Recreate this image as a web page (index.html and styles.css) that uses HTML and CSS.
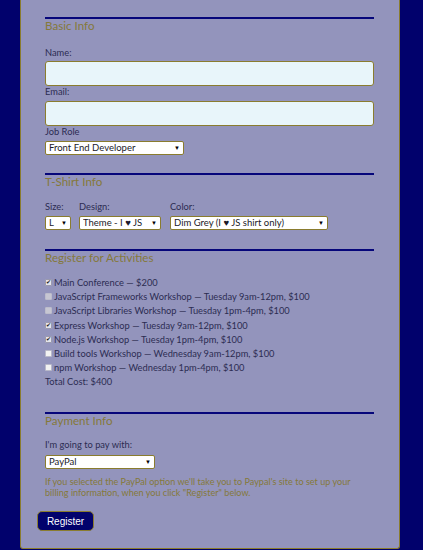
FILE: index.html
```
<!DOCTYPE html>
<html>
<head>
<meta charset="utf-8">
<link rel="stylesheet" href="styles.css">
</head>
<body>
<div class="page">
  <form class="form">
    <section class="sec">
      <div class="legend">Basic Info</div>
      <label class="lbl lbl-name">Name:</label>
      <input class="txt" type="text">
      <label class="lbl lbl-email">Email:</label>
      <input class="txt" type="email">
      <label class="lbl lbl-job">Job Role</label>
      <span class="sel sel-job"><select><option>Front End Developer</option></select></span>
    </section>

    <section class="sec sec-shirt">
      <div class="legend">T-Shirt Info</div>
      <div class="shirt-row">
        <div class="shirt-col">
          <label class="lbl">Size:</label>
          <span class="sel sel-size"><select><option>L</option></select></span>
        </div>
        <div class="shirt-col">
          <label class="lbl">Design:</label>
          <span class="sel sel-design"><select><option>Theme - I ♥ JS</option></select></span>
        </div>
        <div class="shirt-col">
          <label class="lbl">Color:</label>
          <span class="sel sel-color"><select><option>Dim Grey (I ♥ JS shirt only)</option></select></span>
        </div>
      </div>
    </section>

    <section class="sec sec-act">
      <div class="legend">Register for Activities</div>
      <ul class="acts">
        <li><span class="cb on"></span>Main Conference — $200</li>
        <li><span class="cb dis"></span>JavaScript Frameworks Workshop — Tuesday 9am-12pm, $100</li>
        <li><span class="cb dis"></span>JavaScript Libraries Workshop — Tuesday 1pm-4pm, $100</li>
        <li><span class="cb on"></span>Express Workshop — Tuesday 9am-12pm, $100</li>
        <li><span class="cb on"></span>Node.js Workshop — Tuesday 1pm-4pm, $100</li>
        <li><span class="cb"></span>Build tools Workshop — Wednesday 9am-12pm, $100</li>
        <li><span class="cb"></span>npm Workshop — Wednesday 1pm-4pm, $100</li>
      </ul>
      <div class="total">Total Cost: $400</div>
    </section>

    <section class="sec sec-pay">
      <div class="legend">Payment Info</div>
      <label class="lbl lbl-pay">I'm going to pay with:</label>
      <span class="sel sel-pay"><select><option>PayPal</option></select></span>
      <p class="note">If you selected the PayPal option we'll take you to Paypal's site to set up your billing information, when you click "Register" below.</p>
    </section>

    <button class="btn" type="button">Register</button>
  </form>
</div>
</body>
</html>
```
FILE: styles.css
```
html, body {
  margin: 0;
  padding: 0;
  background: #01016c;
  height: 100%;
}
body {
  font-family: "Lato", "Noto Sans", sans-serif;
  color: #2c2c52;
  font-size: 9.3px;
}
.page {
  width: 329px;
  margin-left: 20px;
  padding: 17px 25px 17px 24px;
  background: #9394bc;
  border: 1px solid #8a7c2e;
  border-top: none;
  border-radius: 0 0 3px 3px;
  height: 514px;
}
.form {
  display: flex;
  flex-direction: column;
}
.sec {
  display: flex;
  flex-direction: column;
  align-items: flex-start;
}
.legend {
  align-self: stretch;
  border-top: 2px solid #06067a;
  color: #85793a;
  font-size: 11.6px;
  line-height: 14px;
  margin-bottom: 14px;
}
.lbl {
  display: block;
  font-size: 9.3px;
  line-height: 12px;
  color: #2c2c52;
}
.lbl-name { margin-bottom: 2px; }
.lbl-email { margin-bottom: 3px; }
.lbl-job { margin-bottom: 3px; }
.txt {
  box-sizing: border-box;
  align-self: stretch;
  height: 25px;
  margin: 0;
  border: 1px solid #8a7c2e;
  border-radius: 3px;
  background: #e8f5fa;
  font: inherit;
}
.sel {
  position: relative;
  display: inline-block;
  height: 14px;
}
.sel select {
  -webkit-appearance: none;
  appearance: none;
  box-sizing: border-box;
  width: 100%;
  height: 14px;
  margin: 0;
  padding: 0 0 0 3px;
  border: 1px solid #8a7c2e;
  border-radius: 2px;
  background: #ffffff;
  color: #1a1a2a;
  font-family: "Lato", "Noto Sans", sans-serif;
  font-size: 9.5px;
  line-height: 12px;
}
.sel::after {
  content: "▼";
  position: absolute;
  right: 4px;
  top: 3px;
  font-size: 6px;
  line-height: 8px;
  color: #000;
  pointer-events: none;
}
.sel-job { width: 139px; }
.sec-shirt { margin-top: 18px; }
.shirt-row {
  display: flex;
  gap: 8px;
}
.shirt-col {
  display: flex;
  flex-direction: column;
  gap: 3px;
}
.shirt-col .lbl { margin-top: -2px; }
.sel-size { width: 26px; }
.sel-design { width: 82px; }
.shirt-col:nth-child(3) { margin-left: 1px; }
.sel-color { width: 158px; }
.sec-act { margin-top: 19px; }
.sec-act .legend { margin-bottom: 10px; }
.acts {
  list-style: none;
  margin: 0;
  padding: 0;
}
.acts li {
  display: flex;
  align-items: center;
  height: 14.3px;
  font-size: 9.3px;
  color: #2c2c52;
}
.cb {
  box-sizing: border-box;
  width: 7px;
  height: 7px;
  margin-right: 2px;
  border: 1px solid #b9b9c9;
  background: #f2f2f2;
  border-radius: 1px;
  position: relative;
}
.cb.dis {
  background: #c6c6d2;
  border-color: #bcbccb;
}
.cb.on {
  background: #e4e4ec;
  border-color: #9a9aae;
}
.cb.on::after {
  content: "✔";
  position: absolute;
  left: 0;
  top: -2px;
  font-size: 6px;
  line-height: 8px;
  color: #222;
}
.total {
  font-size: 9.3px;
  line-height: 12px;
  color: #2c2c52;
  margin-top: 1px;
}
.sec-pay { margin-top: 24px; }
.sec-pay .legend { margin-bottom: 11px; }
.lbl-pay { margin-bottom: 4px; }
.sel-pay { width: 110px; }
.note {
  margin: 8px 0 0;
  color: #85793a;
  font-size: 9.1px;
  line-height: 10.5px;
  width: 320px;
}
.btn {
  align-self: flex-start;
  margin: 13px 0 0 -8px;
  width: 57px;
  height: 20px;
  padding: 0;
  background: #02026c;
  color: #ffffff;
  border: 1px solid #8a7c2e;
  border-radius: 5px;
  font-family: "Liberation Sans", Arial, sans-serif;
  font-size: 10px;
}
```
